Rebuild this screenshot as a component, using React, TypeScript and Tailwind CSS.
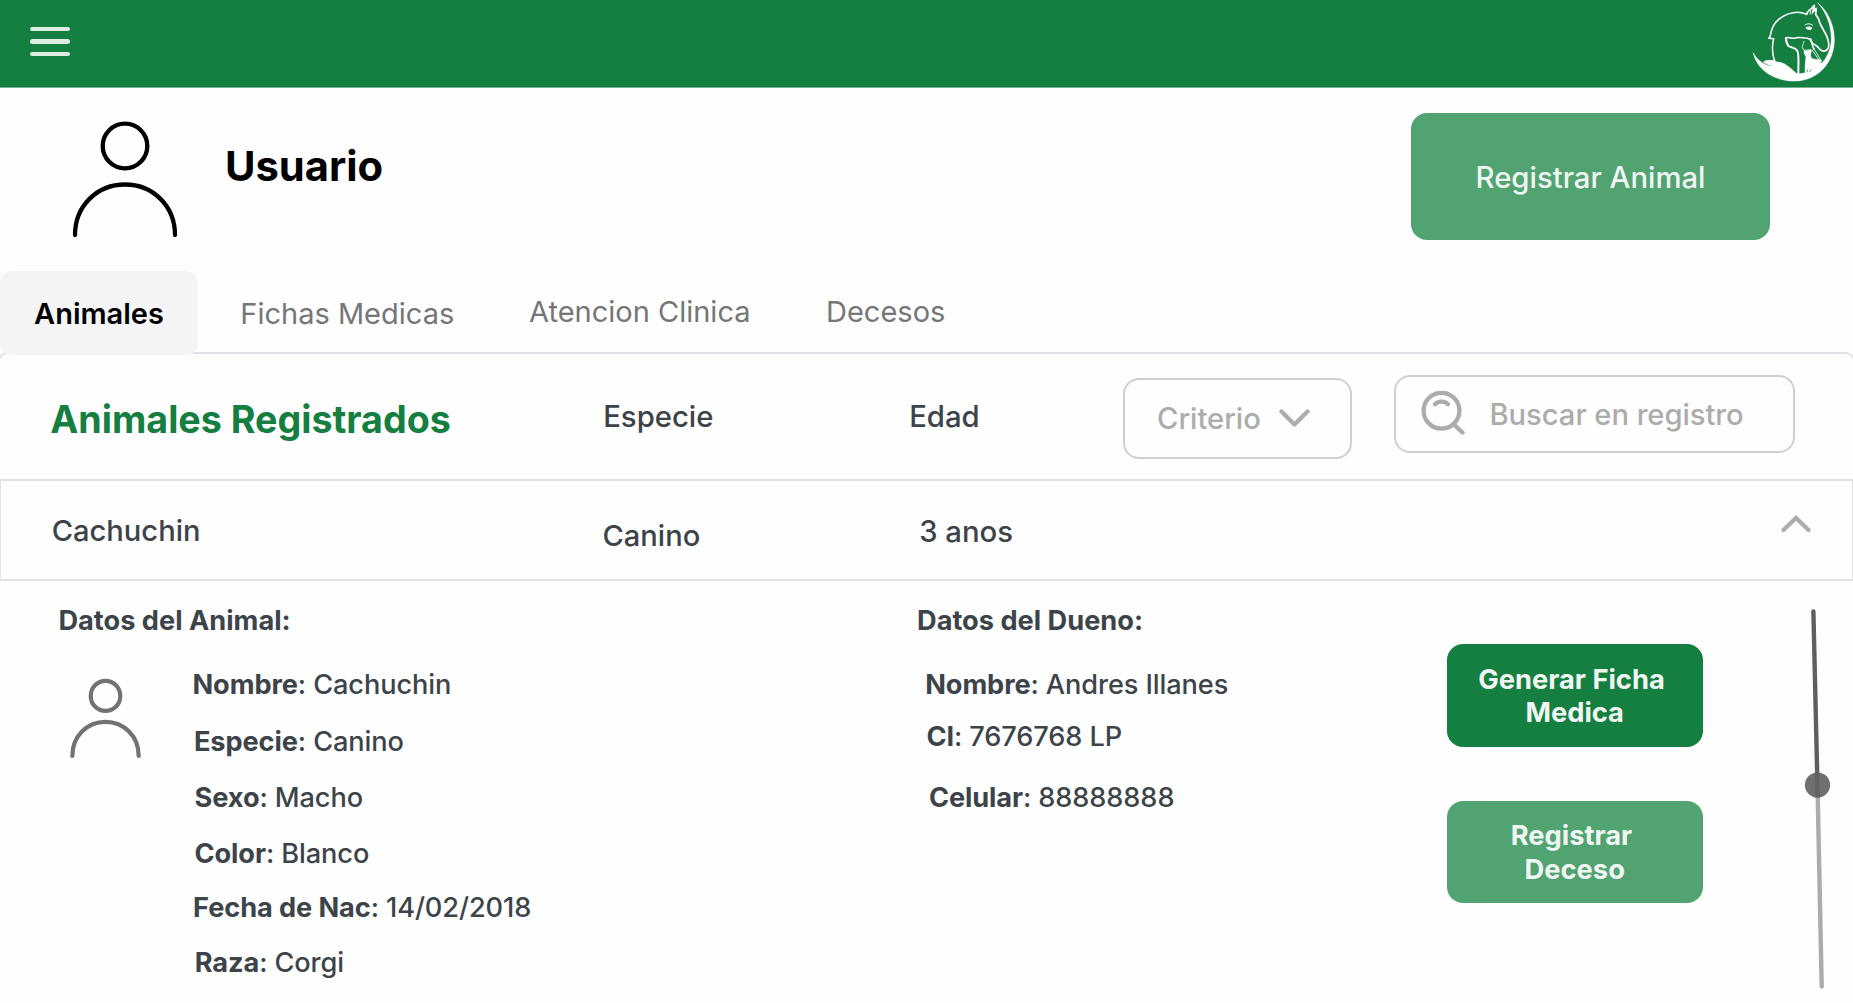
import React from "react";

type Field = { label: string; value: string; place: string };

const animalFields: Field[] = [
  { label: "Nombre", value: "Cachuchin", place: "h-[56.5px]" },
  { label: "Especie", value: "Canino", place: "h-[56.5px] pl-[1.4px]" },
  { label: "Sexo", value: "Macho", place: "h-[56px] pl-[2px]" },
  { label: "Color", value: "Blanco", place: "h-[54px] pl-[2px]" },
  { label: "Fecha de Nac", value: "14/02/2018", place: "h-[54.5px] pl-[0.6px]" },
  { label: "Raza", value: "Corgi", place: "h-[34px] pl-[2.2px]" },
];

const ownerFields: Field[] = [
  { label: "Nombre", value: "Andres Illanes", place: "h-[52px]" },
  { label: "CI", value: "7676768 LP", place: "h-[60.5px] pl-[1.2px]" },
  { label: "Celular", value: "88888888", place: "h-[34px] pl-[3.7px]" },
];

function FieldList({ fields }: { fields: Field[] }) {
  return (
    <dl className="flex flex-col text-[27.2px] leading-[34px] font-medium whitespace-nowrap">
      {fields.map((f) => (
        <div key={f.label} className={f.place}>
          <dt className="inline font-bold tracking-[-0.1px]">{f.label}</dt>
          <dd className="inline tracking-[-0.1px]">: {f.value}</dd>
        </div>
      ))}
    </dl>
  );
}

function HorseLogo() {
  return (
    <svg
      className="h-[95px] w-[113px] shrink-0"
      viewBox="0 0 339 285"
      fill="none"
      stroke="#fff"
      strokeLinecap="round"
      strokeLinejoin="round"
    >
      {/* crescent and ground */}
      <path
        fill="#fff"
        strokeWidth="1.5"
        d="M40 159C49 207 100 243 163 243C231 243 283 190 283 119C283 76 264 33 233 8C259 37 274 76 274 116C274 141 265 166 248 187C242 194 240 188 243 181C236 178 225 178 216 176C212 171 210 163 214 154L213 148L207 151L197 153L192 151C191 160 195 165 198 170C196 185 195 198 195 219L177 221L168 220C158 209 146 199 132 191C122 186 108 185 97 186C87 187 79 189 70 187C79 193 90 196 101 199C79 200 54 184 40 159Z"
      />
      <path fill="#fff" stroke="none" d="M70 184C82 178 98 179 110 184L106 191C94 192 79 191 70 184Z" />
      {/* horse */}
      <path
        strokeWidth="4.5"
        d="M104 184C97 163 95 139 101 116L86 115C91 111 92 106 93 98C99 67 126 43 160 38C177 35 190 39 200 43"
      />
      <path
        strokeWidth="5"
        d="M200 43C201 37 207 30 215 25L223 16L219 36L228 25C229 32 228 37 227 43C234 51 237 59 239 68C245 83 257 99 262 113C267 127 269 139 263 147C257 155 248 154 242 150C237 146 234 140 229 137C224 134 221 133 217 129C214 125 213 121 212 117"
      />
      <path strokeWidth="3" d="M212 32L210 42M221 24L216 42" />
      <path fill="#fff" stroke="none" d="M196 83C202 78 211 78 217 84C214 91 206 92 201 88Z" />
      <path strokeWidth="3" d="M195 75C202 70 211 70 218 76" />
      {/* dog */}
      <path
        strokeWidth="4.5"
        d="M137 115C143 109 153 116 163 115C173 110 185 113 196 114C205 114 212 117 215 128C218 137 219 142 222 148"
      />
      <path strokeWidth="6" d="M138 114C137 124 141 131 145 138C154 143 166 143 171 151C178 160 175 181 175 220" />
      <path strokeWidth="2.5" d="M192 124C190 134 184 140 189 147C194 152 200 151 207 149M220 143L246 186M217 151L238 181" />
      <path stroke="#147F40" strokeWidth="2" d="M201 216L203 209M209 215L213 209" />
    </svg>
  );
}

function Person({ className, strokeWidth }: { className: string; strokeWidth: number }) {
  return (
    <svg className={className} viewBox="0 0 104 117" fill="none" stroke="currentColor" strokeWidth={strokeWidth} strokeLinecap="round" preserveAspectRatio="none">
      <circle cx="52" cy="25" r="22.3" />
      <path d="M2 114C2 85 24 63.500 52 63.500s50 21.500 50 50.500" />
    </svg>
  );
}

function ActionButton({ className, first, second }: { className: string; first: string; second: string }) {
  return (
    <button
      className={`flex h-[102.5px] w-[256.5px] flex-col items-center justify-center rounded-[16px] pt-[2px] text-[27.3px] leading-[33.4px] font-bold text-[#f0f6f2] ${className}`}
    >
      <span className="pr-[6.500px]">{first}</span>
      <span>{second}</span>
    </button>
  );
}

export default function App() {
  return (
    <div className="h-[1003px] w-full overflow-hidden bg-[#fefefe] font-['Inter',sans-serif] text-[#3d4449]">
      <header className="flex h-[88px] items-start justify-between border-b border-[#75b490] bg-[#147f40]">
        <button className="mt-[27px] ml-[30px] flex flex-col gap-[8.2px]" aria-label="Menu">
          <span className="h-[4.3px] w-[40px] rounded-full bg-[#deebe3]" />
          <span className="h-[4.3px] w-[40px] rounded-full bg-[#deebe3]" />
          <span className="h-[4.3px] w-[40px] rounded-full bg-[#deebe3]" />
        </button>
        <HorseLogo />
      </header>

      <section className="flex h-[183px] items-start">
        <Person className="mt-[33px] ml-[73px] h-[117px] w-[104px] overflow-visible text-black" strokeWidth={4.3} />
        <h1 className="mt-[53px] ml-[48px] text-[41.700px] leading-[50px] font-bold text-black">Usuario</h1>
        <button className="mt-[24.5px] mr-[83.500px] ml-auto h-[127px] w-[359px] rounded-[16px] bg-[#52a372] pt-[4.500px] pl-[1px] text-[29.3px] font-medium text-[#f0f6f2]">
          Registrar Animal
        </button>
      </section>

      <nav className="relative z-10 flex h-[81px] items-start text-[29px] leading-[40px] whitespace-nowrap text-[#767676]">
        <button className="h-[83.500px] w-[198px] shrink-0 rounded-[12px] bg-[#f4f4f4] pt-[2px] font-semibold text-black">
          Animales
        </button>
        <button className="mt-[23px] ml-[42.300px]">Fichas Medicas</button>
        <button className="mt-[20.700px] w-[297px] ml-[74.800px] text-left">Atencion Clinica</button>
        <button className="mt-[20.700px]">Decesos</button>
      </nav>

      <section className="-mx-[2px] flex h-[127px] items-start rounded-t-[9px] border-x-2 border-t-2 border-[#e0e3e6] whitespace-nowrap">
        <h2 className="mt-[45.500px] w-[552px] pl-[50.200px] text-[37.650px] leading-[40px] font-bold text-[#147f40]">
          Animales Registrados
        </h2>
        <span className="mt-[43px] ml-[51.200px] w-[306px] text-[29.300px] leading-[40px] font-medium">Especie</span>
        <span className="mt-[43px] w-[214.300px] text-[29.300px] leading-[40px] font-medium">Edad</span>
        <button className="mt-[23.500px] flex h-[81px] w-[229px] items-center rounded-[16px] border-2 border-[#cfcfcf] pt-[2px] pl-[31.500px] text-[29.200px] font-medium text-[#acacac]">
          Criterio
          <svg className="mb-[2px] ml-[18.500px] h-[18px] w-[31px]" viewBox="0 0 31 18" fill="none" stroke="currentColor" strokeWidth="4.300" strokeLinecap="round" strokeLinejoin="round">
            <path d="M2.500 2.500L15.500 15.500L28.500 2.500" />
          </svg>
        </button>
        <div className="mt-[21px] ml-[42px] flex h-[77.500px] w-[400.500px] items-center rounded-[16px] border-2 border-[#cfcfcf] text-[29.200px] font-medium text-[#acacac]">
          <svg className="mb-[1.500px] ml-[23.500px] h-[44px] w-[46px] shrink-0" viewBox="0 0 46 44" fill="none" stroke="currentColor" strokeWidth="4.300" strokeLinecap="round">
            <circle cx="21.500" cy="19.700" r="17.900" />
            <path d="M35 34.500L42.500 41.500" />
            <path d="M15 13.200C18.500 9.700 24.500 9.700 28 13.200" />
          </svg>
          <span className="ml-[23.500px] pt-[2.500px] tracking-[-0.05px]">Buscar en registro</span>
        </div>
      </section>

      <section className="flex h-[102px] items-start border-x border-y-2 border-[#e0e3e6] text-[29.100px] leading-[40px] font-medium">
        <span className="mt-[30px] ml-[50.700px] w-[550.800px]">Cachuchin</span>
        <span className="mt-[35px] w-[316.700px]">Canino</span>
        <span className="mt-[31px] text-[29.300px]">3 anos</span>
        <svg className="mt-[33.500px] mr-[41.500px] ml-auto h-[18px] w-[30px] text-[#acacac]" viewBox="0 0 30 18" fill="none" stroke="currentColor" strokeWidth="4.300" strokeLinecap="round" strokeLinejoin="miter">
          <path d="M2.500 15L15 3L27.500 15" />
        </svg>
      </section>

      <section className="flex items-start">
        <div className="w-[917px]">
          <h3 className="mt-[23px] ml-[58.400px] text-[27.200px] leading-[34px] font-bold">Datos del Animal:</h3>
          <div className="mt-[30px] flex items-start">
            <Person className="mt-[10.500px] ml-[70.500px] h-[79px] w-[69px] overflow-visible text-[#727272]" strokeWidth={6.3} />
            <div className="ml-[53px]">
              <FieldList fields={animalFields} />
            </div>
          </div>
        </div>
        <div className="w-[529.500px]">
          <h3 className="mt-[23px] text-[27.200px] leading-[34px] font-bold">Datos del Dueno:</h3>
          <div className="mt-[30px] ml-[8.200px]">
            <FieldList fields={ownerFields} />
          </div>
        </div>
        <div className="mt-[63px] flex flex-col gap-[54px]">
          <ActionButton className="bg-[#147f40]" first="Generar Ficha" second="Medica" />
          <ActionButton className="bg-[#52a372]" first="Registrar" second="Deceso" />
        </div>
        <svg className="mt-[26px] ml-[96.500px] h-[385px] w-[36px] shrink-0" viewBox="0 0 36 385" strokeLinecap="round" strokeWidth="4.400">
          <path d="M17.500 178L21.700 379.500" stroke="#acacac" />
          <path d="M13.400 4.500L17.300 172" stroke="#5f5f5f" />
          <circle cx="17.500" cy="178" r="12.600" fill="#707070" />
          <path d="M16.900 166L17.300 178L17.600 190.500" stroke="#626262" strokeLinecap="butt" />
        </svg>
      </section>
    </div>
  );
}
